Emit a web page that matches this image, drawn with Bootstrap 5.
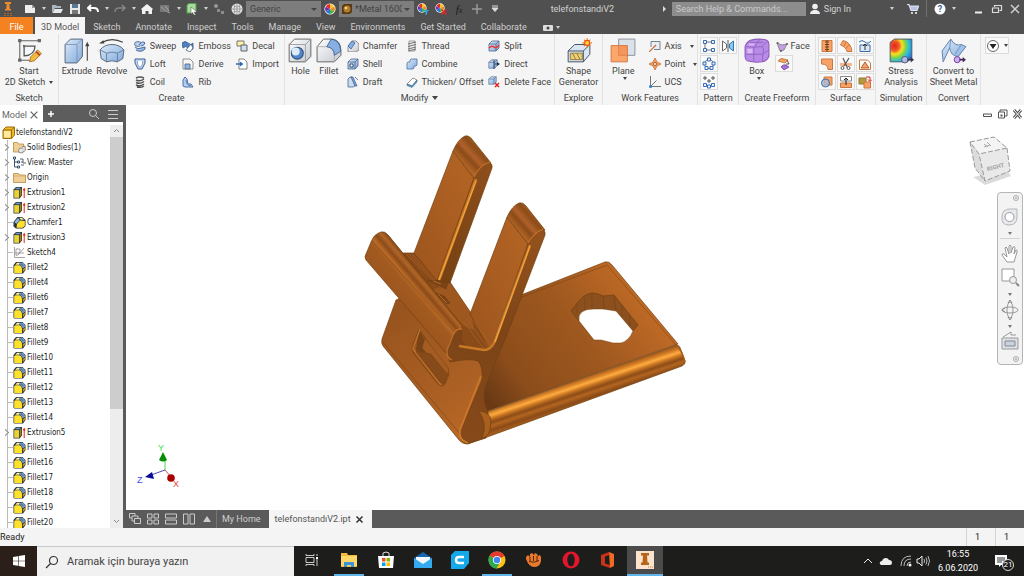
<!DOCTYPE html>
<html lang="en">
<head>
<meta charset="utf-8">
<meta name="viewport" content="width=device-width, initial-scale=1">
<title>telefonstandıV2</title>
<link href="https://cdn.jsdelivr.net/npm/bootstrap@5.3.0/dist/css/bootstrap.min.css" rel="stylesheet">
<style>
body{font:9px/12px Roboto,sans-serif;color:#444;background:#f4f4f4;height:100vh;overflow:hidden}
button,input,select{font:inherit;color:inherit}
button{background:none;border:0;padding:0}
svg{display:block;flex:none}
a{color:inherit;text-decoration:none}
.i12{width:12px;height:12px}.i14{width:14px;height:14px}.i24{width:26px;height:26px}
/* title bar */
.titlebar{height:17px;background:#505050;color:#d0d0d0}
.tb{width:18px;height:17px;display:flex;align-items:center;justify-content:center;flex:none}
.app-menu{margin-right:3px}
.caret{width:9px;height:17px;display:flex;align-items:center;justify-content:center;flex:none}
.caret::before,.drop::after{content:"";border:2px solid transparent;border-top:3px solid currentColor;border-bottom:0}
.modify-name::after{border-width:3px;border-top-width:4px;border-bottom:0}
.combo{width:75px;height:16px;background:#7d7d7d;color:#424242;border:0;padding:0 12px 0 4px;appearance:none;border-radius:0}
.combo-wrap{position:relative}
.combo-wrap::after{content:"";position:absolute;right:4px;top:7px;border:3px solid transparent;border-top:3px solid #444;border-bottom:0;pointer-events:none}
.combo.metal{padding-left:16px}
.combo-wrap svg{position:absolute;left:3px;top:3px}
.params{color:#1c1c1c;font:italic 11px "Liberation Serif",serif}
.help-search{width:134px;height:14px;background:#8d8d8d;border:0;padding:0 4px;color:#ddd}
.help-search::placeholder{color:#c9c9c9;opacity:1}
.sign-in{margin-right:36px}
.help-caret{margin-right:12px}
.tabs{height:17px;background:#505050;color:#cfcfcf}
.tabs a{padding:0 7px 0 8px;line-height:20px}
.tabs .file-tab{background:#f58220;color:#fff;width:33px;padding:0;text-align:center;margin-right:2px;height:17px}
.tabs .on{background:#f5f5f5;color:#555;padding:0 6px;height:17px}
/* ribbon */
.ribbon{display:grid;grid-template-columns:59fr 226fr 270fr 48fr 95fr 41fr 77fr 60fr 51fr 54fr 43fr;height:71px;background:#f5f5f5}
.panel{border-right:1px solid #e2e2e2;display:flex;flex-direction:column;min-width:0}
.panel:last-child{border:0}
.panel-body{display:grid;flex:1;padding-top:3px;align-items:start}
.panel-name{height:14px;line-height:14px;text-align:center;white-space:nowrap}
.cols-create{grid-template-columns:36fr 34fr 49fr 54fr 53fr}
.cols-modify{grid-template-columns:31fr 26fr 59fr 83fr 71fr}
.cols-work{grid-template-columns:41fr 54fr}
.cols-free{grid-template-columns:36fr 41fr}
.big{display:flex;flex-direction:column;align-items:center;line-height:11px;white-space:nowrap;min-width:0;width:100%;padding-top:1px}
.big .lbl{margin-top:2px}
.small-tools{display:grid;grid-auto-rows:18px;padding-left:5px;min-width:0}
.tool{display:flex;align-items:center;gap:4px;white-space:nowrap}
.face-tool{height:18px;gap:2px}
.drop::after{margin-left:4px}
.box{width:18px;height:17px;border:1px solid #dcdcdc;background:#f9f9f9;display:flex;align-items:center;justify-content:center}
.box-grid{display:grid;grid-template-columns:repeat(auto-fill,18px);grid-auto-rows:18px;column-gap:1px;padding-left:2px}
.own-row{grid-column:1}
/* browser */
.browser{width:126px;border-right:3px solid #5a5a5a;background:#fff;font:8px/15px "DejaVu Sans Condensed","DejaVu Sans",sans-serif;color:#1c1c1c}
.browser-head{height:20px;font:9px/18px Roboto,sans-serif}
.model-tab{width:43px;padding:0 4px 0 2px;color:#666}
.head-dark{background:#5d5d5d;color:#d5d5d5;height:17px;margin-right:-3px}
.browser-body,.main-area{min-height:0}
.tree{list-style:none;margin:0;padding:0;flex:1;overflow:hidden;background:linear-gradient(#bbb,#bbb) 7px 15px/1px 100% no-repeat}
.tree li{height:15px;display:flex;align-items:center;padding-left:8px;white-space:nowrap}
.tree li:first-child{padding-left:2px;background:#fff}
.tree li::before{content:"";width:5px;height:1px;background:#bbb;flex:none}
.tree li:first-child::before{display:none}
.tree li.open::before{width:5px;height:5px;border:solid #888;border-width:1px 1px 0 0;transform:rotate(45deg);background:#fff;margin:0 5px 0 -5px}
.tree svg{width:13px;height:13px;margin-right:1px}
.scroll{width:13px;background:#ededed}
.thumb{background:#cdcdcd;flex:273}
.track-rest{flex:107}
/* canvas */
.view-col{min-width:0}
.view-area{background:#fff;min-height:0}
.win-btns{position:absolute;right:1px;top:4px;gap:4px}
.viewcube{position:absolute;right:9px;top:28px}
.navbox{position:absolute;right:1px;top:87px;width:26px;border:1px solid #b5b5b5;border-radius:4px;background:#f3f3f3;padding:1px 2px;color:#777}
.navbox .caret{height:10px;width:100%}
.docs{height:18px;background:#5a5a5a;color:#cfcfcf;line-height:18px}
.docs .ic{width:18px;display:flex;align-items:center;justify-content:center}
.docs .home{border-left:1px solid #777;padding:0 8px 0 5px}
.docs .cur{background:#f5f5f5;color:#555;padding:0 8px 0 6px}
.status{height:18px;line-height:19px;color:#222}
.status span{border-left:1px solid #d4d4d4;width:29px;padding-left:8px}
/* taskbar */
.taskbar{height:30px;background:#1d1d1c;color:#fff}
.start{width:37px;background:#2b2019}
.find{width:257px;background:#f1f1f1;border-top:1px solid #c9c9c9}
.find input{border:0;background:none;font-size:11px;color:#444;width:200px;padding:0}
.find input::placeholder{color:#444;opacity:1}
.app{width:36px;margin-right:1px;border-bottom:2px solid transparent}
.app.run{background:linear-gradient(#62b5ea,#62b5ea) center bottom/30px 2px no-repeat border-box}
.app.now{background:#4b4b4b;border-bottom-color:#62b5ea}
.clock{font-size:9px;line-height:14px;width:48px;text-align:center}
.count{position:absolute;right:-6px;bottom:-3px;width:12px;height:12px;border-radius:50%;background:#1d1d1c;border:1px solid #ddd;font-size:8px;line-height:10px;text-align:center}
</style>
</head>
<body class="d-flex flex-column">
<svg width="0" height="0" class="position-absolute" aria-hidden="true">
<defs>
<linearGradient id="blu" x2="1" y2="1"><stop stop-color="#dceafa"/><stop offset="1" stop-color="#7fa9db"/></linearGradient>
<linearGradient id="gry" x2="1" y2="1"><stop stop-color="#fff"/><stop offset="1" stop-color="#c3c8cf"/></linearGradient>
<radialGradient id="rain" cx=".2" cy=".3" r=".95"><stop stop-color="#e3261b"/><stop offset=".22" stop-color="#f0562a"/><stop offset=".38" stop-color="#fbe01e"/><stop offset=".55" stop-color="#7ed34a"/><stop offset=".72" stop-color="#27bfe0"/><stop offset="1" stop-color="#2b55cc"/></radialGradient>
</defs>
<symbol id="ball" viewBox="0 0 12 12"><circle cx="6" cy="6" r="5.600" fill="#fff"/><path d="M6 6V1a5 5 0 0 1 4.300 2.500z" fill="#f7c51e"/><path d="M6 6l4.300-2.500a5 5 0 0 1 0 5z" fill="#f28a1d"/><path d="M6 6l4.300 2.500A5 5 0 0 1 6 11z" fill="#52b043"/><path d="M6 6v5a5 5 0 0 1-4.300-2.500z" fill="#2a7ad0"/><path d="M6 6L1.700 8.500a5 5 0 0 1 0-5z" fill="#6a35b5"/><path d="M6 6L1.700 3.500A5 5 0 0 1 6 1z" fill="#df2b2b"/></symbol>
<symbol id="fil" viewBox="0 0 13 13"><path d="M.5 4L3 1h6.500l3 3v5L10 12.500H1.500L.5 12z" fill="#26323c"/><path d="M1.200 5.200Q1.500 4.300 3 4.300h3.500Q9 5 9 8v4H1.200z" fill="#ffe12b"/><path d="M2.300 3.800L4 1.800h3L6 3.800z" fill="#fff3a0"/><path d="M6.300 3.600l1.500-2.100Q11.500 1.500 12.100 5.500L9.700 7.500Q9.300 4.500 6.300 3.600z" fill="#7fa9db"/><path d="M8 1.700l2.500 4.500M6.800 3.300l4.700 1" stroke="#28405c" stroke-width=".4"/><path d="M9.800 8.300L12 6.500v2.300L9.800 11z" fill="#c59b10"/></symbol>
<symbol id="ext" viewBox="0 0 13 13"><path d="M.5 3.500L3 1h6v8.500L6.500 12.500h-6z" fill="#2f383c"/><path d="M1.200 4.100H6v7.700H1.200z" fill="#e9d334"/><path d="M1.900 3.300L3.500 1.700h4.300L6.300 3.300z" fill="#6f9bd0"/><path d="M6.700 3.900l1.600-1.600v6.900L6.700 11z" fill="#a08012"/><path d="M11.200 12V3.500" stroke="#d22"/><path d="M9.700 4.500l1.500-3 1.500 3z" fill="#d22"/></symbol>
<symbol id="cha" viewBox="0 0 13 13"><path d="M.5 6l4-5H9l3.500 3v6L10 12.500H3L.5 10.500z" fill="#26323c"/><path d="M3.500 11.800L4 8l3-3.500L11.800 5v4.500l-2 2.300z" fill="#ffe12b"/><path d="M1.300 6.200L4.800 1.900l2 2L3.500 7.800z" fill="#8db6e4"/><path d="M6.200 1.700h2.500L11 3.800H7.800z" fill="#fff3a0"/></symbol>
<symbol id="part" viewBox="0 0 13 13"><path d="M1 4l3-3h8.500v8l-3 3.500H1z" fill="#f0b928" stroke="#9c6c0b"/><path d="M1 4h8.500v8.500M9.500 4l3-3" fill="none" stroke="#9c6c0b"/><path d="M2 5h6.500v6.500H2z" fill="#ffeaa0"/></symbol>
<symbol id="fold" viewBox="0 0 13 13"><path d="M.5 2.500h5l1 1.500h6v7.500H.5z" fill="#efcf95" stroke="#b58a45" stroke-width=".8"/><path d="M.5 5h12" stroke="#d2a965" stroke-width=".8"/></symbol>
<symbol id="folds" viewBox="0 0 13 13"><path d="M.5 1.500h4l1 1.500h5v8H.5z" fill="#efcf95" stroke="#b58a45" stroke-width=".8"/><circle cx="8" cy="9.500" r="2.500" fill="#e8e8e8" stroke="#777" stroke-width=".8"/><path d="M9 6l3-1 .5 4-2 2" fill="#ddd" stroke="#777" stroke-width=".8"/></symbol>
<symbol id="vm" viewBox="0 0 13 13"><path d="M.5 1h2v2h-2zM1.500 3v8h3M1.500 6h3M4.500 5h2v2h-2zM4.500 10h2v2h-2z" stroke="#37506a" fill="none"/><path d="M7 3h3v4h3M8 6h2M8 9h3" stroke="#567" fill="none"/></symbol>
<symbol id="ske" viewBox="0 0 13 13"><path d="M1.500 1v10.500H12M3 9.500V3h4c0 4-1 6-4 6.500M5 9l6-7M2 7h9" fill="none" stroke="#9a9a9a" stroke-width=".9"/></symbol>
<symbol id="x" viewBox="0 0 12 12"><path d="M2 2l8 8M10 2l-8 8" stroke="currentColor" stroke-width="1.500"/></symbol>
<symbol id="solid" viewBox="0 0 12 12"><path d="M1 4l3-3h7v7l-3 3H1z" fill="url(#blu)" stroke="#4d668a" stroke-width=".8"/><path d="M1 4h7v7M8 4l3-3" fill="none" stroke="#4d668a" stroke-width=".8"/></symbol>
</svg>

<header>
<div class="titlebar d-flex align-items-center">
<button class="tb app-menu" aria-label="Application"><svg width="12" height="17" viewBox="0 0 12 17"><path d="M2 2h6v2H6.300l.5 5H8v1.500H2V9h1.200l.5-5H2z" fill="#ee8a2b"/><path d="M1 13.500h8M1 15.500h8" stroke="#a5652a" stroke-dasharray="2 1"/></svg></button>
<button class="tb" aria-label="New"><svg class="i12" viewBox="0 0 12 12"><path d="M1 2h7l3 3v5H1z" fill="#eee"/><path d="M8 2v3h3" fill="#999"/></svg></button><span class="caret"></span>
<button class="tb" aria-label="Open"><svg class="i12" viewBox="0 0 12 12"><path d="M1 10V2h4l1 1h4v2H4z" fill="#aab6bf"/><path d="M3.500 6H12l-2 4H1.500z" fill="#e4e8ea"/></svg></button>
<button class="tb" aria-label="Save"><svg class="i12" viewBox="0 0 12 12"><path d="M1 1h10v10H1z" fill="#e8e8e8"/><path d="M3 1h6v4H3z" fill="#5b7794"/><path d="M3 7h6v4H3z" fill="#777"/></svg></button>
<button class="tb" aria-label="Undo"><svg class="i12" viewBox="0 0 12 12"><path d="M4 2L1 5l3 3M1 5h6q4 0 4 4" fill="none" stroke="#fff" stroke-width="2"/></svg></button><span class="caret"></span>
<button class="tb" aria-label="Redo"><svg class="i12" viewBox="0 0 12 12"><path d="M8 2l3 3-3 3M11 5H5Q1 5 1 9" fill="none" stroke="#858585" stroke-width="1.500"/></svg></button><span class="caret"></span>
<button class="tb" aria-label="Home"><svg class="i12" viewBox="0 0 12 12"><path d="M0 6l6-5 6 5-1 1v4H7.500V8h-3v3H1V7z" fill="#f2f2f2"/></svg></button>
<button class="tb" aria-label="Sheet"><svg class="i12" viewBox="0 0 12 12"><path d="M1 2h9v7H1z" fill="#777"/><path d="M2 4l5 4 4 2M6 3l4 5" stroke="#aaa"/></svg></button><span class="caret"></span>
<button class="tb" aria-label="Select"><svg class="i12" viewBox="0 0 12 12"><path d="M1 2l2-1.500h7V8L8 10H1z" fill="#a9dc9c" stroke="#4fa14a"/><path d="M5 4l6 5-3 .3L10 12H8L6.500 9.500 5 11z" fill="#fff" stroke="#444" stroke-width=".5"/></svg></button><span class="caret"></span>
<button class="tb" aria-label="Return"><svg class="i12" viewBox="0 0 12 12"><circle cx="3" cy="3" r="2" fill="#999"/><path d="M4 6h3v3H4zM8 8h3v3H8z" fill="#8c8c8c"/></svg></button>
<button class="tb" aria-label="Web"><svg class="i12" viewBox="0 0 12 12"><circle cx="6" cy="6" r="5.500" fill="#e6e6e6"/><path d="M1 6h10M6 1v10M2.500 3q3.500 2 7 0M2.500 9q3.500-2 7 0M4 1.500Q2 6 4 10.500M8 1.500q2 4.500 0 9" stroke="#888" fill="none" stroke-width=".7"/></svg></button>
<span class="combo-wrap"><select class="combo" aria-label="Material"><option>Generic</option></select></span>
<button class="tb" aria-label="Appearance"><svg class="i12"><use href="#ball"/></svg></button>
<span class="combo-wrap"><select class="combo metal" aria-label="Finish"><option>*Metal 1600</option></select><svg width="10" height="10" viewBox="0 0 10 10"><path d="M0 2l2-2h8v8l-2 2H0z" fill="#5a3a12"/><circle cx="5" cy="5" r="3.500" fill="#b07c30"/><circle cx="4" cy="4" r="1.300" fill="#f3d28c"/></svg></span>
<button class="tb" aria-label="Adjust"><svg class="i12"><use href="#ball" width="10" height="10"/><path d="M6 7h6l-2 2.500V12H8.500V9.500z" fill="#3aa0d8"/></svg></button>
<button class="tb" aria-label="Clear"><svg class="i12"><use href="#ball" width="10" height="10"/><path d="M6.500 6.500l5 5M11.500 6.500l-5 5" stroke="#e22" stroke-width="1.500"/></svg></button>
<button class="tb params" aria-label="Parameters">f<sub>x</sub></button>
<button class="tb" aria-label="Add"><svg class="i12" viewBox="0 0 12 12"><path d="M6 1v10M1 6h10" stroke="#999" stroke-width="1.500"/></svg></button>
<button class="tb" aria-label="Customize"><svg width="8" height="8" viewBox="0 0 8 8"><path d="M1 1h6M1 3h6L4 6.500z" stroke="#ddd" fill="#ddd"/></svg></button>
<span class="flex-fill text-center">telefonstandıV2</span>
<svg width="11" height="8" viewBox="0 0 11 8"><path d="M2 1l3 3-3 3z" fill="#ddd"/></svg>
<input class="help-search" placeholder="Search Help &amp; Commands..." aria-label="Search help">
<button class="tb" aria-label="Account"><svg class="i12" viewBox="0 0 12 12"><circle cx="6" cy="3.500" r="2.800" fill="#eee"/><path d="M1 11q0-3 3.500-4h3Q11 8 11 11z" fill="#eee"/></svg></button><button class="sign-in">Sign In</button><span class="caret"></span>
<button class="tb ms-2" aria-label="Store"><svg class="i12" viewBox="0 0 12 12"><path d="M0 1.500h2l2 6h6l1.500-4.500H3" fill="#b9c4dd" stroke="#dde3f2" stroke-width="1.200"/><circle cx="5" cy="10" r="1.100" fill="#eee"/><circle cx="9" cy="10" r="1.100" fill="#eee"/></svg></button>
<span class="vr mx-1"></span>
<button class="tb" aria-label="Help"><svg class="i12" viewBox="0 0 12 12"><circle cx="6" cy="6" r="5.500" fill="#fff"/><text x="6" y="9" text-anchor="middle" font-size="9" font-weight="700" fill="#3a63a8">?</text></svg></button><span class="caret help-caret"></span>
<button class="tb" aria-label="Minimize"><svg class="i12" viewBox="0 0 12 12"><path d="M2 9.500h7" stroke="#eee" stroke-width="2"/></svg></button>
<button class="tb" aria-label="Restore"><svg class="i12" viewBox="0 0 12 12"><path d="M3.500 4V2.500h7v5H8.500M1.500 5h6v4.500h-6z" fill="none" stroke="#ddd" stroke-width="1.200"/></svg></button>
<button class="tb" aria-label="Close"><svg class="i12"><use href="#x"/></svg></button>
</div>
<nav class="tabs d-flex">
<a class="file-tab" href="#">File</a><a class="on" href="#">3D Model</a><a href="#">Sketch</a><a href="#">Annotate</a><a href="#">Inspect</a><a href="#">Tools</a><a href="#">Manage</a><a href="#">View</a><a href="#">Environments</a><a href="#">Get Started</a><a href="#">Collaborate</a>
<button class="d-flex align-items-center ms-2 mt-1" aria-label="Ribbon display"><svg width="12" height="8" viewBox="0 0 12 8"><rect x="1" y="1" width="10" height="6" rx="1" fill="#ddd"/><circle cx="6" cy="4" r="1.500" fill="#444"/></svg><span class="caret"></span></button>
</nav>
</header>

<section class="ribbon">
<div class="panel"><div class="panel-body"><button class="big"><svg class="i24" viewBox="0 0 24 24"><path d="M3.500 2v19M2 2.500h21M2 20.500h11" stroke="#666"/><path d="M7.500 16.500v-9h10q0 8-10 9z" fill="#f4f8fc" stroke="#555" stroke-width="1.200"/><path d="M2 1h3v3H2zM2 19h3v3H2zM20 1h3v3h-3zM6.500 6.500h2v2h-2z" fill="#666"/><path d="M12.500 22l1-4.500 6.500-6.500 3.500 3.500L17 21z" fill="#f5b63c" stroke="#a5702a" stroke-width=".8"/><path d="M18.500 12.500l3.500 3.500" stroke="#a83c2a" stroke-width="1.500"/></svg><span class="lbl">Start<br><span class="d-inline-flex align-items-center drop">2D Sketch</span></span></button></div><div class="panel-name">Sketch</div></div>

<div class="panel"><div class="panel-body cols-create">
<button class="big"><svg class="i24" viewBox="0 0 24 24"><path d="M1 6l5-5h11v16l-5 6H1z" fill="url(#blu)" stroke="#56657a" stroke-width=".9"/><path d="M1 6h11v17M12 6l5-5" fill="none" stroke="#7d92b0" stroke-width=".8"/><path d="M21.500 21V6" stroke="#444"/><path d="M19.500 7.500l2-4 2 4z" fill="#444"/></svg><span class="lbl">Extrude</span></button>
<button class="big"><svg class="i24" viewBox="0 0 24 24"><path d="M3 4q9-5 19 0" stroke="#444" fill="none"/><path d="M0 5l4-3 1 3z" fill="#444"/><path d="M1 11q4-5 11-5t11 5l-1 8-5 3q-5-2-10 0l-5-3z" fill="url(#blu)" stroke="#56657a" stroke-width=".9"/><path d="M1 11l6 3q5-2 10 0l6-3M7 14v8M17 14v8" fill="none" stroke="#5f7899" stroke-width=".8"/></svg><span class="lbl">Revolve</span></button>
<div class="small-tools">
<button class="tool"><svg class="i12" viewBox="0 0 12 12"><ellipse cx="4" cy="4" rx="3.500" ry="2.500" fill="#b6d0ee" stroke="#4d668a" stroke-width=".8"/><path d="M1 7q3 3 6 1l4-1v2q-4 4-9 1M5 5q4-5 6-2-1 3-4 3" fill="url(#blu)" stroke="#3f5f94" stroke-width=".9"/></svg>Sweep</button>
<button class="tool"><svg class="i12" viewBox="0 0 12 12"><path d="M1 1h10v4L8 11H4L1 5z" fill="#c4d9f1" stroke="#3f5f94"/><path d="M3.500 3v3l1.500 3h2l1.500-3V3" fill="#fff" stroke="#7d97bf" stroke-width=".8"/></svg>Loft</button>
<button class="tool"><svg class="i12" viewBox="0 0 12 12"><path d="M2 2q4-2 8 0M2 4q4 2 8-1M2 6.500q4 2 8-1M2 9q4 2 8-1M3 11q4 1 7-1" fill="none" stroke="#555" stroke-width="1.500"/></svg>Coil</button></div>
<div class="small-tools">
<button class="tool"><svg class="i12" viewBox="0 0 12 12"><path d="M0 3q3-3 6 0t5 0v6q-3 2-5-1T1 8z" fill="#4e81c4" stroke="#36588c" stroke-width=".8"/><path d="M4 10l5-6 2 4-3 4z" fill="#fff" stroke="#2b4a75" stroke-width=".7"/></svg>Emboss</button>
<button class="tool"><svg class="i12" viewBox="0 0 12 12"><path d="M1 1h7l3 3v7H1z" fill="#f6f6f6" stroke="#777" stroke-width=".8"/><path d="M3 6h5v5H3z" fill="#8cb3e2" stroke="#4d668a" stroke-width=".8"/></svg>Derive</button>
<button class="tool"><svg class="i12" viewBox="0 0 12 12"><path d="M3 1L1 4v6l2 1h8L9 8 6 8 5 3z" fill="#b5d0ee" stroke="#4264a0" stroke-width=".9"/><path d="M4 4q0 5 5 6" stroke="#4264a0" fill="none" stroke-width=".8"/></svg>Rib</button></div>
<div class="small-tools">
<button class="tool"><svg class="i12" viewBox="0 0 12 12"><path d="M1 1h7v5H1z" fill="#fff0a8" stroke="#666" stroke-width=".9"/><path d="M5 5h6v6H5z" fill="#cfdff2" stroke="#555" stroke-width=".9"/></svg>Decal</button>
<button class="tool"><svg class="i12" viewBox="0 0 12 12"><path d="M3 1h5l3 3v7H3z" fill="#fff" stroke="#777" stroke-width=".9"/><path d="M0 6h5" stroke="#2b6cb5" stroke-width="1.500"/><path d="M4 3.500L7.500 6 4 8.500z" fill="#2b6cb5"/></svg>Import</button></div>
</div><div class="panel-name">Create</div></div>

<div class="panel"><div class="panel-body cols-modify">
<button class="big"><svg class="i24" viewBox="0 0 24 24"><path d="M2 6l5-5h15v16l-5 5H2z" fill="url(#gry)" stroke="#666" stroke-width=".9"/><path d="M2 6h15v16M17 6l5-5" fill="none" stroke="#999" stroke-width=".8"/><circle cx="9.500" cy="14" r="5.500" fill="#4f85c9" stroke="#35507a"/><circle cx="8" cy="12.500" r="3.700" fill="#dceafa"/></svg><span class="lbl">Hole</span></button>
<button class="big"><svg class="i24" viewBox="0 0 24 24"><path d="M1 8l6-7h8q8 1 8 11v4l-6 6H1z" fill="url(#gry)" stroke="#666" stroke-width=".9"/><path d="M1 8h9q7 1 7 9v5" fill="none" stroke="#aaa" stroke-width=".8"/><path d="M14 1q8 1 9 11l-6 4q0-7-7-8z" fill="#86b0e3" stroke="#3f5f94" stroke-width=".8"/></svg><span class="lbl">Fillet</span></button>
<div class="small-tools">
<button class="tool"><svg class="i12" viewBox="0 0 12 12"><path d="M1 7l4-6h4l3 3v6l-3 2H1z" fill="url(#gry)" stroke="#777" stroke-width=".8"/><path d="M1 6l4-5 3 2-4 6z" fill="#86b0e3" stroke="#3f5f94" stroke-width=".8"/></svg>Chamfer</button>
<button class="tool"><svg class="i12"><use href="#solid"/><path d="M3 6h3v3H3z" fill="#fff" stroke="#3b5374"/></svg>Shell</button>
<button class="tool"><svg class="i12" viewBox="0 0 12 12"><path d="M1 3l2-2h2l3 9-2 1H1z" fill="#c9dcf3" stroke="#4d668a" stroke-width=".8"/><path d="M4 1h2l4 9H8zM8 1l3 3" fill="#7aa7df" stroke="#4d668a" stroke-width=".8"/></svg>Draft</button></div>
<div class="small-tools">
<button class="tool"><svg class="i12" viewBox="0 0 12 12"><path d="M3 1h6v10H3z" fill="#eee" stroke="#888" stroke-width=".8"/><path d="M2 4l8-2M2 6.500l8-2M2 9l8-2M2 11l8-2" stroke="#666" stroke-width=".9"/></svg>Thread</button>
<button class="tool"><svg class="i12" viewBox="0 0 12 12"><path d="M4 2l1-1h6v6l-1 1H8v2l-1 1H1V5l1-1h2z" fill="url(#blu)" stroke="#5c7fac" stroke-width=".9"/></svg>Combine</button>
<button class="tool"><svg class="i12" viewBox="0 0 12 12"><path d="M1 8l6-6 4 2-5 6z" fill="#fff" stroke="#777" stroke-width=".8"/><path d="M1 8l5 2 5-6v2l-5 5.500-5-2z" fill="#4ba3e0" stroke="#4a6b80" stroke-width=".6"/></svg>Thicken/ Offset</button></div>
<div class="small-tools">
<button class="tool"><svg class="i12"><use href="#solid"/><path d="M1 8q3-3 5-1t5-2" stroke="#e33" fill="none" stroke-width="1.500"/></svg>Split</button>
<button class="tool"><svg class="i12"><use href="#solid" width="10"/><path d="M6 2v9M7 6h3" stroke="#346"/><path d="M9 4l3 2-3 2z" fill="#234"/></svg>Direct</button>
<button class="tool"><svg class="i12"><use href="#solid" width="9" height="9"/><path d="M7 7l4 4M11 7l-4 4" stroke="#d22" stroke-width="1.500"/></svg>Delete Face</button></div>
</div><div class="panel-name"><button class="d-inline-flex align-items-center drop modify-name">Modify</button></div></div>

<div class="panel"><div class="panel-body"><button class="big"><svg class="i24" viewBox="0 0 24 24"><path d="M2 12l6-6h14v9l-6 7H2z" fill="#dbe6f2" stroke="#445064" stroke-width=".9"/><path d="M4 14h11v6H4z" fill="#e9cf78" stroke="#8a7230" stroke-width=".8"/><path d="M2 12h14v10M16 12l6-6" fill="none" stroke="#445064" stroke-width=".9"/><path d="M6 14l3 6M10 14l3 6" stroke="#8a7230" stroke-width=".8"/><path d="M19.500 0v9M15 4.500h9M16.500 1.500l6 6M22.500 1.500l-6 6" stroke="#f08020"/><circle cx="19.500" cy="4.500" r="2.300" fill="#ffd23c" stroke="#e5541a"/></svg><span class="lbl">Shape<br>Generator</span></button></div><div class="panel-name">Explore</div></div>

<div class="panel"><div class="panel-body cols-work"><button class="big"><svg class="i24" viewBox="0 0 24 24"><path d="M8 1h15v15H8z" fill="#dbe1e9" stroke="#8a93a0" stroke-width=".9"/><path d="M1 7h15v15H1z" fill="#fba66b" stroke="#cf7a45" stroke-width=".9"/><path d="M8 7h8v9H8z" fill="#f7965a" stroke="#cf7a45" stroke-width=".6"/></svg><span class="lbl d-flex flex-column align-items-center drop">Plane</span></button>
<div class="small-tools">
<button class="tool drop"><svg class="i12" viewBox="0 0 12 12"><path d="M2 1.500h9v8H5M2 1.500V7" fill="#e9eef5" stroke="#678" stroke-width=".9"/><path d="M0 12l7-7" stroke="#c96a35" stroke-width="1.200"/></svg>Axis</button>
<button class="tool drop"><svg class="i12" viewBox="0 0 12 12"><path d="M6 0l2 4 4 2-4 2-2 4-2-4-4-2 4-2z" fill="#f3a064" stroke="#c0703a" stroke-width=".8"/><circle cx="6" cy="6" r="1.500" fill="#fff" stroke="#b35a22"/></svg>Point</button>
<button class="tool"><svg class="i12" viewBox="0 0 12 12"><path d="M1.500 0v10.500H12M1.500 10.500l6-6" stroke="#777" fill="none"/><circle cx="1.500" cy="10.500" r="1.500" fill="#2b80d0"/></svg>UCS</button></div></div><div class="panel-name">Work Features</div></div>

<div class="panel"><div class="panel-body"><div class="box-grid">
<button class="box" aria-label="Rectangular"><svg class="i14" viewBox="0 0 14 14"><path d="M3 3h8M3 3v8h8" stroke="#777" fill="none"/><path d="M1.500 1.500h3v3h-3zM9.500 1.500h3v3h-3zM1.500 9.500h3v3h-3zM9.500 9.500h3v3h-3z" fill="#e8f1ff" stroke="#3a6cb8"/></svg></button>
<button class="box" aria-label="Mirror"><svg class="i14" viewBox="0 0 14 14"><path d="M1.500 2l4 3v4l-4 3z" fill="#fff" stroke="#666"/><path d="M7 1v12" stroke="#555"/><path d="M12.500 2l-4 3v4l4 3z" fill="#8fc6ee" stroke="#2b7ab5"/></svg></button>
<button class="box own-row" aria-label="Circular"><svg class="i14" viewBox="0 0 14 14"><circle cx="7" cy="7" r="4.500" fill="none" stroke="#777"/><path d="M5.500 1h3v3h-3zM1 5h3v3H1zM10 5h3v3h-3zM3 9.500h3v3H3zM8 9.500h3v3H8z" fill="#e8f1ff" stroke="#3a6cb8"/></svg></button>
<button class="box own-row" aria-label="Sketch driven"><svg class="i14" viewBox="0 0 14 14"><path d="M3 1v4M1 3h4M7 4v4M11 1v4M9 3h4M5 6h4" stroke="#555"/><path d="M1.500 8.500h3v3h-3zM5.500 10h3v3h-3zM9.500 8.500h3v3h-3z" fill="#e8f1ff" stroke="#3a6cb8"/></svg></button>
</div></div><div class="panel-name">Pattern</div></div>

<div class="panel"><div class="panel-body cols-free"><button class="big"><svg class="i24" viewBox="0 0 24 24"><path d="M1 8Q2 4 6 2q8-2 15 0 2 1 2 4v11q-2 4-6 5-8 1-14-1-2-1-2-4z" fill="#b98be8" stroke="#8b5bb8"/><path d="M2 8q8 1 14 0 2 0 2 3-1 6-1 11M16 8l6-5M9 8.500v13M1.500 15H17M17 15l6-4M10 8l4-6M5 4h13" fill="none" stroke="#9465c2" stroke-width=".9"/><path d="M3 10h5v4H3zM5 5h5L9 7H4z" fill="#dcb8f7"/></svg><span class="lbl d-flex flex-column align-items-center drop">Box</span></button>
<div><button class="tool face-tool"><svg class="i14" viewBox="0 0 14 14"><path d="M2 4l5 2 5-1-3 6-4 1z" fill="#c3a0e6" stroke="#777" stroke-width=".8"/><circle cx="2.500" cy="4" r="1.100" fill="#666"/><circle cx="12" cy="5" r="1.100" fill="#666"/><circle cx="6" cy="12" r="1.100" fill="#666"/></svg>Face</button><button class="box" aria-label="Convert"><svg class="i14" viewBox="0 0 14 14"><path d="M1 4q3-4 6-2l4 1-3 3z" fill="#f5a05e" stroke="#b8743a" stroke-width=".8"/><path d="M4 10q2-3 5-2l3 2-5 3z" fill="#a66fd5" stroke="#7a4aa5" stroke-width=".8"/><path d="M10 3l2 4-3 0" fill="none" stroke="#555"/></svg></button></div></div><div class="panel-name">Create Freeform</div></div>

<div class="panel"><div class="panel-body"><div class="box-grid">
<button class="box" aria-label="Stitch"><svg class="i14" viewBox="0 0 14 14"><path d="M2 1.500h10v11H2z" fill="#f9a268" stroke="#c97840"/><path d="M7 1v12M5 3h4M5 5.500h4M5 8h4M5 10.500h4" stroke="#6a4020"/></svg></button>
<button class="box" aria-label="Ruled"><svg class="i14" viewBox="0 0 14 14"><path d="M1.500 6L4 1.500Q12 3 13 12.500H8Q7 8 1.500 6z" fill="#f9a268" stroke="#c97840"/><path d="M7 3L5 7M10 6L7 9.500" stroke="#c97840"/></svg></button>
<button class="box" aria-label="Thicken"><svg class="i14" viewBox="0 0 14 14"><path d="M1 3q3-3 6 0t6-1M2 12.500h10V6H2z" fill="#dbe8f7" stroke="#3b6aa5"/><path d="M7 11V5M5 7l2-2 2 2" stroke="#333" fill="none"/></svg></button>
<button class="box" aria-label="Patch"><svg class="i14" viewBox="0 0 14 14"><path d="M1.500 2h11v10.500H8Q8 7 1.500 7z" fill="#f9a268" stroke="#c97840"/></svg></button>
<button class="box" aria-label="Trim"><svg class="i14" viewBox="0 0 14 14"><path d="M1 6h12v3H1z" fill="#f9b68a"/><path d="M4 1l4 9M10 1L5 9" stroke="#555" stroke-width="1.200"/><circle cx="3.500" cy="11" r="1.500" fill="#fff" stroke="#555"/><circle cx="9.500" cy="11" r="1.500" fill="#fff" stroke="#555"/></svg></button>
<button class="box" aria-label="Sculpt"><svg class="i14" viewBox="0 0 14 14"><path d="M1.500 3h8l3 3v6.500h-11z" fill="#fff" stroke="#c97840"/><path d="M3 11l4-6 4 6z" fill="#f9a268" stroke="#b0602a"/></svg></button>
<button class="box" aria-label="Replace"><svg class="i14" viewBox="0 0 14 14"><path d="M4 2h8v8H4z" fill="#f9a268" stroke="#c97840"/><circle cx="5.500" cy="8" r="4" fill="#9fc0e8" fill-opacity=".7" stroke="#3b6aa5"/></svg></button>
<button class="box" aria-label="Extend"><svg class="i14" viewBox="0 0 14 14"><path d="M1.500 1.500h11V6h-11z" fill="#fff" stroke="#888"/><path d="M1.500 8h11v4.500h-11z" fill="#f9a268" stroke="#c97840"/><path d="M7 10V3M5 5l2-2 2 2" stroke="#222" fill="none"/></svg></button>
<button class="box" aria-label="Repair"><svg class="i14" viewBox="0 0 14 14"><path d="M1 3h7v6H1z" fill="#b59a3a" stroke="#8c7838"/><path d="M6 7h6.500v6H6z" fill="#f9a268" stroke="#c97840"/><path d="M8 2h4v4M10 4.500l2 2 2-2" stroke="#d22" fill="none"/></svg></button>
</div></div><div class="panel-name">Surface</div></div>

<div class="panel"><div class="panel-body"><button class="big"><svg class="i24" viewBox="0 0 24 24"><path d="M2 4l4-3h16v17l-4 4H2z" fill="url(#rain)" stroke="#556" stroke-width=".9"/><circle cx="15.500" cy="20" r="3" fill="#a9bce0" stroke="#557" stroke-width=".9"/><path d="M18 20h4" stroke="#335" stroke-width="1.500"/><path d="M21 17.500l3 2.500-3 2.500z" fill="#335"/></svg><span class="lbl">Stress<br>Analysis</span></button></div><div class="panel-name">Simulation</div></div>
<div class="panel"><div class="panel-body"><button class="big"><svg class="i24" viewBox="0 0 24 24"><path d="M1 12L9 1q4 7 10 5l4 2-7 9Q9 17 8 9L2 22z" fill="url(#blu)" stroke="#6283ae" stroke-width=".9"/><path d="M9 1L8 9M19 6l-6 9" stroke="#6283ae" stroke-width=".7"/><circle cx="15" cy="20" r="2.800" fill="#cbb5ec" stroke="#73a" stroke-width=".9"/><path d="M17 20h4" stroke="#425" stroke-width="1.500"/><path d="M20 17.500l3 2.500-3 2.500z" fill="#425"/></svg><span class="lbl">Convert to<br>Sheet Metal</span></button></div><div class="panel-name">Convert</div></div>
<div class="panel"><div class="panel-body ps-1"><button class="box w-auto me-3 drop" aria-label="Finish"><svg class="i14" viewBox="0 0 14 14"><circle cx="7" cy="7" r="5.500" fill="#fff" stroke="#666"/><path d="M3.500 5h7L7 10z" fill="#222"/></svg></button></div></div>
</section>

<main class="main-area d-flex flex-fill">
<aside class="browser d-flex flex-column flex-shrink-0">
<div class="browser-head d-flex"><button class="model-tab bg-white d-flex align-items-center justify-content-between">Model<svg width="10" height="10"><use href="#x"/></svg></button>
<div class="head-dark flex-fill d-flex align-items-center px-1 gap-1"><button aria-label="Add tab"><svg width="8" height="8" viewBox="0 0 8 8"><path d="M4 1v6M1 4h6" stroke="#fff" stroke-width="1.500"/></svg></button><button class="ms-auto" aria-label="Search"><svg class="i12" viewBox="0 0 12 12"><circle cx="5" cy="5" r="3.500" fill="none" stroke="#ccc"/><path d="M8 8l3 3" stroke="#ccc"/></svg></button><button class="mx-1" aria-label="Menu"><svg width="10" height="10" viewBox="0 0 10 10"><path d="M0 1.500h10M0 5.500h10M0 9.500h10" stroke="#ccc"/></svg></button></div></div>
<div class="browser-body d-flex flex-fill"><ul class="tree" id="tree"></ul>
<div class="scroll d-flex flex-column align-items-center"><svg width="13" height="12" viewBox="0 0 13 12"><path d="M4 7l2.500-2.500L9 7" fill="none" stroke="#888"/></svg><div class="thumb w-100"></div><div class="track-rest"></div><svg width="13" height="12" viewBox="0 0 13 12"><path d="M4 4l2.500 2.500L9 4" fill="none" stroke="#888"/></svg></div></div>
</aside>

<div class="view-col d-flex flex-column flex-fill">
<div class="view-area position-relative flex-fill">
<svg class="w-100 h-100" viewBox="126 105 898 405" role="img" aria-label="Phone stand model">
<defs>
<linearGradient id="plate" gradientUnits="userSpaceOnUse" x1="490" y1="400" x2="640" y2="290"><stop stop-color="#6b3a14"/><stop offset=".2" stop-color="#8c4d1b"/><stop offset=".6" stop-color="#9e581f"/><stop offset="1" stop-color="#c06a26"/></linearGradient>
<linearGradient id="edge" gradientUnits="userSpaceOnUse" x1="580" y1="378" x2="588" y2="402"><stop stop-color="#a25a1c"/><stop offset=".12" stop-color="#c97420"/><stop offset=".28" stop-color="#ffab40"/><stop offset=".42" stop-color="#c2701f"/><stop offset=".55" stop-color="#8c4c18"/><stop offset=".68" stop-color="#b3651f"/><stop offset=".85" stop-color="#8a4b18"/><stop offset="1" stop-color="#a55c1e"/></linearGradient>
<linearGradient id="arm" x1="1" y1="0" x2="0" y2="1"><stop stop-color="#b56525"/><stop offset="1" stop-color="#9c551d"/></linearGradient>
<linearGradient id="side" x1="1" y1="0" x2="0" y2="1"><stop stop-color="#8e4f1c"/><stop offset="1" stop-color="#744013"/></linearGradient>
<linearGradient id="front" gradientUnits="userSpaceOnUse" x1="535" y1="240" x2="470" y2="440"><stop stop-color="#92511d"/><stop offset=".5" stop-color="#7c4417"/><stop offset="1" stop-color="#86491a"/></linearGradient>
<linearGradient id="capA" gradientUnits="userSpaceOnUse" x1="455" y1="154" x2="472" y2="138"><stop stop-color="#b16324"/><stop offset=".3" stop-color="#8a4b19"/><stop offset=".5" stop-color="#b0612a"/><stop offset=".8" stop-color="#8c4c18"/><stop offset="1" stop-color="#a65b20"/></linearGradient>
<linearGradient id="capB" gradientUnits="userSpaceOnUse" x1="509" y1="220" x2="526" y2="205"><stop stop-color="#b16324"/><stop offset=".3" stop-color="#8a4b19"/><stop offset=".5" stop-color="#b0612a"/><stop offset=".8" stop-color="#8c4c18"/><stop offset="1" stop-color="#a65b20"/></linearGradient>
<linearGradient id="bar" gradientUnits="userSpaceOnUse" x1="399" y1="300" x2="427" y2="276"><stop stop-color="#9d561e"/><stop offset=".42" stop-color="#a25a20"/><stop offset=".55" stop-color="#b96a27"/><stop offset=".68" stop-color="#8b4b19"/><stop offset=".8" stop-color="#b16527"/><stop offset=".92" stop-color="#854817"/><stop offset="1" stop-color="#a05a20"/></linearGradient>
<linearGradient id="back" gradientUnits="userSpaceOnUse" x1="385" y1="320" x2="470" y2="430"><stop stop-color="#98541e"/><stop offset=".7" stop-color="#ac6024"/><stop offset="1" stop-color="#b96826"/></linearGradient>
</defs>
<g stroke="#70400f" stroke-width=".7" stroke-linejoin="round">
<path d="M521 295L605 262Q609 261 612 265L678 344L485 412L478 380Z" fill="url(#plate)"/>
<path d="M522 297L607 265L676 345" fill="none" stroke-width=".5"/>
<path d="M484 413L674 346Q679 343 681 350L685 361Q686 364 682 366L468 444Z" fill="url(#edge)"/>
<path d="M676 345Q682 350 685 362" fill="none" stroke="#a85c1c" stroke-width="1.500"/>
<path d="M571 311L578 302Q584 294 592 293Q598 293 603 296L614 295L638 325L633 331L594 340L579 321Z" fill="#8c4f1e"/>
<path d="M579 321Q577 309 594 309L603 309L616 311L633 331Q629 341 621 343L613 343L601 340L594 340Z" fill="#fff" stroke-width=".5"/>
<path d="M585 298v12M592 294v14M603 296l1 13M614 296l2 15M622 305v12M630 315v12M577 304v10" fill="none" stroke-width=".5"/>
<path d="M396 300L382 339Q381 343 383 346L459 440Q462 444 468 444L484 390L494 346L430 285Z" fill="url(#back)"/>
<path d="M383 342L461 435" fill="none" stroke-width=".5"/>
<path d="M403 253L414 253L436 278L450 282L471 313L494 346L488 352L450 350L420 300Z" fill="#8a4b19"/>
<path d="M450 283L471 313L474 330L462 325L432 290Z" fill="#9d571f" stroke="none"/>
<path d="M406 254L440 287M409 254L438 283M412 254L437 280" stroke="#a9602a"/>
<path d="M453 151L474 178L437 281L414 253Z" fill="url(#arm)"/>
<path d="M453 151Q458 139 465 136Q468 135 471 138L491 163L474 178Z" fill="url(#capA)"/>
<path d="M474 178Q480 166 489 162Q493 164 492 168L450 283L437 281Z" fill="url(#side)"/>
<path d="M476 179L439 280" stroke="#c87826" stroke-width="3"/><path d="M476 181L439 280" stroke="#f7a53c" stroke-width="1.200"/>
<path d="M474 177Q480 165 490 162" fill="none" stroke="#c4742a" stroke-width="1.200"/>
<path d="M470 314L507 217L528 244L490 351Z" fill="url(#arm)"/>
<path d="M507 217Q512 206 519 203Q523 202 526 206L545 230L528 244Z" fill="url(#capB)"/>
<path d="M528 244Q534 234 542 229Q546 231 545 235L508 332L485 388Q482 400 488 412L486 438L466 444Q459 440 460 432L482 380Q483 366 478 361Q470 358 450 362L446 352L455 331L462 327L461 340L466 347L486 350Q491 349 495 340Z" fill="url(#front)"/>
<path d="M470 317L492 346M467 319L488 348M464 322L484 349" stroke="#a9622a" fill="none"/>
<path d="M530 245L495 341Q491 350 484 350L459 346" fill="none" stroke="#c87826" stroke-width="2.500"/><path d="M530 246L495 342" stroke="#f7a53c" stroke-width="1.200"/>
<path d="M528 243Q534 233 543 229" fill="none" stroke="#c4742a" stroke-width="1.200"/>
<path d="M371 242Q374 234 381 232Q385 231 388 235L462 325Q463 329 459 329Q452 332 446 353L366 260Q364 257 366 254Z" fill="url(#bar)"/>
<path d="M372 241L455 333M388 235L462 326" fill="none" stroke-width=".5"/>
<path d="M462 329Q456 328 453 335L447 350Q446 358 452 360" fill="none" stroke="#bb6e2a" stroke-width="1.500"/>
<path d="M419 329L412 348Q412 352 414 354L438 384Q442 388 445 384L449 374Z" fill="#99551d"/>
<path d="M419 329L427 345L424 353L416 350Z" fill="#7a4317" stroke="none"/>
<path d="M425 338L449 369L447 376L422 348Z" fill="#a55c22" stroke-width=".5"/>
<path d="M416 351L431 354L447 374L444 384Q440 382 438 379Z" fill="#874a1a" stroke-width=".5"/>
<path d="M420 329L413 349L441 385" fill="none" stroke="#bd6f2a" stroke-width="1.500"/>
<path d="M416 352L441 383" stroke="#7a4317" stroke-width=".6"/>
<path d="M481 376L460 430Q458 440 468 443" fill="none" stroke="#c9792d" stroke-width="1.800"/>
<path d="M468 361Q479 366 480 377" fill="none" stroke="#a9622a"/>
<path d="M479 411Q490 412 491 420L490 430Q488 437 482 438Q488 425 479 411Z" fill="#a9601f"/>
<path d="M436 293L444 296L450 303L447 304ZM427 280L448 282L446 289Z" fill="#7a4317"/>
<path d="M438 294L447 303M433 281l8 3" stroke="#c9792d"/>
</g>
<g stroke-width=".8"><path d="M165 470V460" stroke="#2c2"/><path d="M165 470L151 475" stroke="#22a"/><path d="M165 470L171 477" stroke="#c22"/><path d="M163 452l4 8q-4 3-8 0z" fill="#078c07"/><path d="M145 477l7-5 2 7z" fill="#0a0a98"/><circle cx="171" cy="478" r="3.800" fill="#a00"/></g>
<g font-size="9" font-family="Liberation Sans, sans-serif"><text x="158" y="451" fill="#4d4">Y</text><text x="137" y="483" fill="#44e">Z</text><text x="173" y="487" fill="#e44">X</text></g>
</svg>
<div class="win-btns d-flex align-items-center"><button aria-label="Minimize view"><svg width="11" height="10" viewBox="0 0 11 10"><path d="M1.500 5h8v2.500h-8z" fill="#fff" stroke="#555"/></svg></button><button aria-label="Restore view"><svg width="11" height="10" viewBox="0 0 11 10"><path d="M3 3V1h7v6H8M1.500 3h6v6h-6z" fill="none" stroke="#555"/><path d="M3.500 5.500h2v2h-2z" fill="#555"/></svg></button><button aria-label="Close view"><svg width="11" height="10" viewBox="0 0 11 10"><path d="M2 1l7 8M9 1L2 9" stroke="#555" stroke-width="3"/><path d="M2 1l7 8M9 1L2 9" stroke="#fff" stroke-width="1"/></svg></button></div>
<svg class="viewcube" width="50" height="54" viewBox="0 0 50 54"><path d="M8 44l12 8 26-9-4-6z" fill="#999" opacity=".35"/><path d="M5 9L29 4l13 11-28 6z" fill="#f4f4f4"/><path d="M5 9l9 12 6 27L10 35z" fill="#dcdcdc"/><path d="M14 21l28-6 3 23-25 10z" fill="#e9e9e9"/><path d="M5 9L29 4l13 11-28 6zM5 9l5 26 10 13-6-27M42 15l3 23-25 10" fill="none" stroke="#999" stroke-dasharray="5 2"/><text x="31" y="36" text-anchor="middle" font-size="6" font-weight="700" fill="#a5a5a5" transform="rotate(-15 31 36)">RIGHT</text><path d="M19 11l4 3M22 9l4 4M19 14l6-2" stroke="#aaa"/></svg>
<div class="navbox d-flex flex-column align-items-center">
<svg class="align-self-end" width="8" height="8" viewBox="0 0 8 8"><circle cx="4" cy="4" r="2.500" fill="none" stroke="#aaa"/><path d="M3 3l2 2M5 3L3 5" stroke="#aaa" stroke-width=".7"/></svg>
<button class="mt-1" aria-label="Wheel"><svg width="20" height="22" viewBox="0 0 20 22"><path d="M2 11q0-8 8-8h7v8q0 8-8 8t-7-8z" fill="#e6e9ed" stroke="#b5b5b5"/><circle cx="9.500" cy="11" r="4.500" fill="#fff" stroke="#999"/></svg></button><span class="caret"></span><hr class="w-100 my-0">
<button class="mt-1" aria-label="Pan"><svg width="20" height="22" viewBox="0 0 20 22"><path d="M7 19L2 12q0-2 2-1l3 3-2-9q1-2 2 0l2 6V3q1-2 2 0v7l2-6q2-1 2 1l-1 6 2-4q2 0 1 2l-3 10z" fill="#fff" stroke="#999"/></svg></button>
<button aria-label="Zoom"><svg width="20" height="24" viewBox="0 0 20 24"><path d="M2 4h12v12H2z" fill="#fff" stroke="#999"/><circle cx="13" cy="15" r="3.500" fill="#eee" stroke="#999"/><path d="M16 18l3 3" stroke="#888" stroke-width="2"/></svg></button><span class="caret"></span>
<button aria-label="Orbit"><svg width="20" height="22" viewBox="0 0 20 22"><ellipse cx="10" cy="11" rx="8" ry="3" fill="none" stroke="#999"/><ellipse cx="10" cy="11" rx="3" ry="8" fill="none" stroke="#999"/><path d="M8 4l2-3 2 3M8 18l2 3 2-3M5 9l-3 2 3 2" stroke="#888" fill="none"/></svg></button><span class="caret"></span>
<button aria-label="Look at"><svg width="20" height="20" viewBox="0 0 20 20"><path d="M3 6l8-5v3h5" fill="none" stroke="#999"/><path d="M2 7h16v11H2z" fill="#dde2ea" stroke="#999"/><path d="M5 10h10v5H5z" fill="#c9d2e0" stroke="#888"/></svg></button>
<svg class="align-self-end mt-1" width="8" height="8" viewBox="0 0 8 8"><circle cx="4" cy="4" r="2.500" fill="none" stroke="#aaa"/><circle cx="4" cy="4" r="1" fill="#aaa"/></svg>
</div>
</div>
<div class="docs d-flex flex-shrink-0">
<button class="ic" aria-label="Cascade"><svg class="i12" viewBox="0 0 12 12"><path d="M6 3V.5H.5V5H3M9 5V3H3v5h2M5.500 5.500h6v5h-6z" fill="none" stroke="#ccc"/></svg></button>
<button class="ic" aria-label="Grid"><svg class="i12" viewBox="0 0 12 12"><path d="M.5 1h4.500v4H.5zM7 1h4.500v4H7zM.5 7h4.500v4H.5zM7 7h4.500v4H7z" fill="none" stroke="#ccc"/></svg></button>
<button class="ic" aria-label="Rows"><svg class="i12" viewBox="0 0 12 12"><path d="M.5 1h11v4H.5zM.5 7h11v4H.5z" fill="none" stroke="#ccc"/></svg></button>
<button class="ic" aria-label="Columns"><svg class="i12" viewBox="0 0 12 12"><path d="M.5 1h4.500v10H.5zM7 1h4.500v10H7z" fill="none" stroke="#ccc"/></svg></button>
<button class="ic" aria-label="More"><svg width="8" height="6" viewBox="0 0 8 6"><path d="M0 6l4-6 4 6z" fill="#ccc"/></svg></button>
<a class="home" href="#">My Home</a>
<a class="cur d-flex align-items-center gap-1" href="#">telefonstandıV2.ipt <svg width="9" height="9" viewBox="0 0 12 12"><path d="M2 2l8 8M10 2l-8 8" stroke="#333" stroke-width="2"/></svg></a>
</div>
</div>
</main>
<footer>
<div class="status d-flex"><div class="flex-fill">Ready</div><span>1</span><span>1</span></div>
<div class="taskbar d-flex">
<button class="start d-flex align-items-center justify-content-center" aria-label="Start"><svg class="i12" viewBox="0 0 12 12"><path d="M0 2l5-.8V5.700H0zM5.600 1.100L12 0v5.700H5.600zM0 6.300h5v4.500L0 10zM5.600 6.300H12V12l-6.400-1.100z" fill="#fff"/></svg></button>
<label class="find d-flex align-items-center ps-2 gap-2"><svg class="i14" viewBox="0 0 14 14"><circle cx="8.500" cy="5.500" r="4" fill="none" stroke="#333" stroke-width="1.200"/><path d="M5.500 8.500L1 13" stroke="#333" stroke-width="1.200"/></svg><input placeholder="Aramak için buraya yazın" aria-label="Aramak için buraya yazın"></label>
<nav class="d-flex">
<button class="app d-flex align-items-center justify-content-center" aria-label="Task view"><svg width="14" height="14" viewBox="0 0 14 14"><path d="M1 4.500h8v5H1zM1 1v1.500h8V1M1 13v-1.500h8V13M12 1v2M12 5v8" fill="none" stroke="#ccc"/><path d="M11 4h2v2h-2z" fill="#fff"/></svg></button>
<button class="app run d-flex align-items-center justify-content-center" aria-label="Explorer"><svg width="18" height="18" viewBox="0 0 18 18"><path d="M1 2h6l1 2h9v12H1z" fill="#f3b93f"/><path d="M1 5h16v10H1z" fill="#fdd868"/><path d="M4 16v-5h10v5h-3v-2H7v2z" fill="#3f92d6"/></svg></button>
<button class="app d-flex align-items-center justify-content-center" aria-label="Store"><svg width="18" height="18" viewBox="0 0 18 18"><path d="M6 5V2q3-2 6 0v3" fill="none" stroke="#ddd"/><path d="M1 5h16l-1 12H2z" fill="#fff"/><path d="M5 7h3.500v3.500H5z" fill="#f25022"/><path d="M9.500 7H13v3.500H9.500z" fill="#7fba00"/><path d="M5 11.500h3.500V15H5z" fill="#00a4ef"/><path d="M9.500 11.500H13V15H9.500z" fill="#ffb900"/></svg></button>
<button class="app d-flex align-items-center justify-content-center" aria-label="Mail"><svg width="20" height="18" viewBox="0 0 20 18"><path d="M1 7l9-6 9 6v10H1z" fill="#1667b0"/><path d="M3 6h14v7H3z" fill="#f4f9ff"/><path d="M1 7l9 6 9-6v10H1z" fill="#34aaf0"/></svg></button>
<button class="app d-flex align-items-center justify-content-center" aria-label="Cura"><svg width="18" height="18" viewBox="0 0 18 18"><path d="M4 0h14v12l-5 6H0V4z" fill="#14a9e8"/><path d="M13 6H8Q5 6 5 9t3 3h5" fill="none" stroke="#fff" stroke-width="2.500"/></svg></button>
<button class="app run d-flex align-items-center justify-content-center" aria-label="Chrome"><svg width="18" height="18" viewBox="0 0 18 18"><circle cx="9" cy="9" r="8.500" fill="#fbc116"/><path d="M9 9L1.600 4.800A8.500 8.500 0 0 1 16.400 5z" fill="#e33b2e"/><path d="M9 9L1.600 4.800A8.500 8.500 0 0 0 8.500 17.500L12 11z" fill="#2da94f"/><circle cx="9" cy="9" r="4" fill="#fff"/><circle cx="9" cy="9" r="3.200" fill="#4285f4"/></svg></button>
<button class="app d-flex align-items-center justify-content-center" aria-label="Fist"><svg width="16" height="16" viewBox="0 0 16 16"><path d="M0 5l2-2 2 2V2l2-1 2 2 1-2 2 1 1 2 2-1 1 2v4q-1 6-7 6-5 0-8-8z" fill="#e77a2d"/><path d="M4 5v4M7.500 4v5M11 4v5M3 9.500q5 2 10-1" stroke="#5c2305" fill="none"/></svg></button>
<button class="app d-flex align-items-center justify-content-center" aria-label="Opera"><svg width="18" height="18" viewBox="0 0 18 18"><circle cx="9" cy="9" r="8.500" fill="#e2162c"/><ellipse cx="9" cy="9" rx="3.700" ry="6.300" fill="#1d1d1c"/></svg></button>
<button class="app d-flex align-items-center justify-content-center" aria-label="Office"><svg width="18" height="18" viewBox="0 0 18 18"><path d="M2 4l8-3v3L6 5.500v7l5 1.500v3L2 14z" fill="#c6321a"/><path d="M10 1l5 2v12l-4 2z" fill="#f06a25"/></svg></button>
<button class="app now d-flex align-items-center justify-content-center" aria-label="Inventor"><svg width="18" height="18" viewBox="0 0 18 18"><path d="M0 0h18v18H0z" fill="#fbe3cd"/><path d="M5 2h8v2.500h-2l.5 7H13V14H5v-2.500h1.500l.5-7H5z" fill="#b8651c"/><path d="M12 16h5" stroke="#e08030" stroke-dasharray="1 1"/></svg></button>
</nav>
<div class="d-flex align-items-center ms-auto gap-1">
<svg width="14" height="10" viewBox="0 0 14 10"><path d="M3 7l4-4 4 4" fill="none" stroke="#eee"/></svg>
<svg width="13" height="10" viewBox="0 0 13 10"><path d="M2 9q-2-1-1-3 1-1 2-1 1-3 4-3 2 0 3 2 3 0 3 3 0 2-2 2z" fill="#eee"/></svg>
<svg class="ms-1" width="12" height="12" viewBox="0 0 12 12"><path d="M1 11Q1 1 11 1M4 11q0-7 7-7M7 11q0-4 4-4" fill="none" stroke="#bbb"/><circle cx="10" cy="10" r="1.500" fill="#fff"/></svg>
<svg width="14" height="12" viewBox="0 0 14 12"><path d="M1 4h2l3-3v10L3 8H1z" fill="none" stroke="#eee"/><path d="M8 4q1 2 0 4M10 2.500q2 3.500 0 7M12 1q3 5 0 10" fill="none" stroke="#bbb"/></svg>
<div class="clock">16:55<br>6.06.2020</div>
<button class="position-relative ms-2 me-3" aria-label="Notifications"><svg width="14" height="14" viewBox="0 0 14 14"><path d="M1 1h12v10H7l-2 2v-2H1z" fill="#fff"/><path d="M3 4h8M3 6h8M3 8h5" stroke="#333"/></svg><span class="count">21</span></button>
</div>
</div>
</footer>
<script>
// kind, label, expandable
const rows = [["part","telefonstandıV2"],["folds","Solid Bodies(1)",1],["vm","View: Master",1],["fold","Origin",1],["ext","Extrusion1",1],["ext","Extrusion2",1],["cha","Chamfer1"],["ext","Extrusion3",1],["ske","Sketch4"]];
for (const n of [2,4,6,7,8,9,10,11,12,13,14]) rows.push(["fil","Fillet"+n]);
rows.push(["ext","Extrusion5",1]);
for (let n = 15; n <= 20; n++) rows.push(["fil","Fillet"+n]);
document.getElementById("tree").innerHTML = rows.map(([k,t,o]) => `<li class="${o?"open":""}"><svg viewBox="0 0 13 13"><use href="#${k}"/></svg>${t}</li>`).join("");
</script>
<script src="https://cdn.jsdelivr.net/npm/bootstrap@5.3.0/dist/js/bootstrap.bundle.min.js"></script>
</body>
</html>
